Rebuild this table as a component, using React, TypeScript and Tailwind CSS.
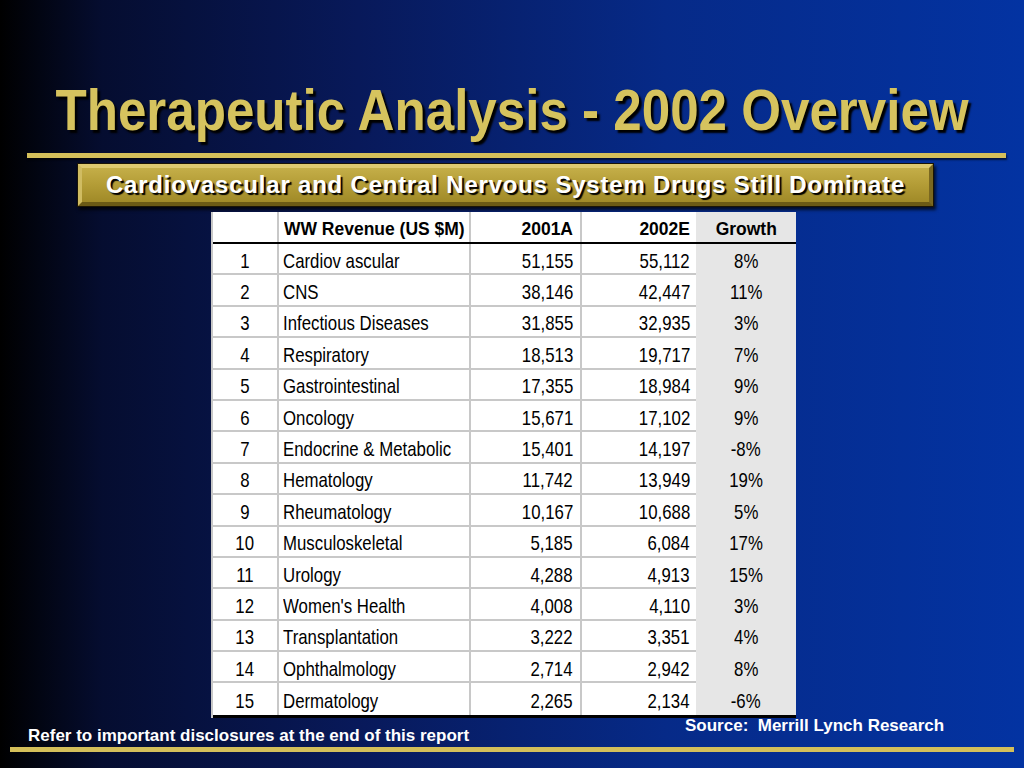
import React from "react";

const rows: [string, string, string, string, string][] = [
  ["1", "Cardiov ascular", "51,155", "55,112", "8%"],
  ["2", "CNS", "38,146", "42,447", "11%"],
  ["3", "Infectious Diseases", "31,855", "32,935", "3%"],
  ["4", "Respiratory", "18,513", "19,717", "7%"],
  ["5", "Gastrointestinal", "17,355", "18,984", "9%"],
  ["6", "Oncology", "15,671", "17,102", "9%"],
  ["7", "Endocrine & Metabolic", "15,401", "14,197", "-8%"],
  ["8", "Hematology", "11,742", "13,949", "19%"],
  ["9", "Rheumatology", "10,167", "10,688", "5%"],
  ["10", "Musculoskeletal", "5,185", "6,084", "17%"],
  ["11", "Urology", "4,288", "4,913", "15%"],
  ["12", "Women's Health", "4,008", "4,110", "3%"],
  ["13", "Transplantation", "3,222", "3,351", "4%"],
  ["14", "Ophthalmology", "2,714", "2,942", "8%"],
  ["15", "Dermatology", "2,265", "2,134", "-6%"],
];

const cols = "grid grid-cols-[66px_192px_111px_114px_100px]";

function Row({ r, last }: { r: [string, string, string, string, string]; last: boolean }) {
  return (
    <div className={`${cols} h-[31.4px] text-[21px] leading-none overflow-hidden`}>
      <div
        className={
          last
            ? "bg-white border-r-2 border-solid border-[#c8c8c8] flex items-center justify-center pt-[3px]"
            : "bg-white border-r-2 border-b-2 border-solid border-[#c8c8c8] flex items-center justify-center pt-[3px]"
        }
      >
        <span className="inline-block scale-x-[0.8] origin-center">{r[0]}</span>
      </div>
      <div
        className={
          last
            ? "bg-white border-r-2 border-solid border-[#c8c8c8] flex items-center pl-[4px] pt-[3px]"
            : "bg-white border-r-2 border-b-2 border-solid border-[#c8c8c8] flex items-center pl-[4px] pt-[3px]"
        }
      >
        <span className="inline-block scale-x-[0.8] origin-left">{r[1]}</span>
      </div>
      <div
        className={
          last
            ? "bg-white border-r-2 border-solid border-[#c8c8c8] flex items-center justify-end pr-[7px] pt-[3px]"
            : "bg-white border-r-2 border-b-2 border-solid border-[#c8c8c8] flex items-center justify-end pr-[7px] pt-[3px]"
        }
      >
        <span className="inline-block scale-x-[0.8] origin-right">{r[2]}</span>
      </div>
      <div
        className={
          last
            ? "bg-white flex items-center justify-end pr-[6px] pt-[3px]"
            : "bg-white border-b-2 border-solid border-[#c8c8c8] flex items-center justify-end pr-[6px] pt-[3px]"
        }
      >
        <span className="inline-block scale-x-[0.8] origin-right">{r[3]}</span>
      </div>
      <div
        className={
          last
            ? "bg-[#e6e6e6] flex items-center justify-center pt-[3px]"
            : "bg-[#e6e6e6] border-b-2 border-solid border-[#e6e6e6] flex items-center justify-center pt-[3px]"
        }
      >
        <span className="inline-block scale-x-[0.8] origin-center">{r[4]}</span>
      </div>
    </div>
  );
}

export default function App() {
  return (
    <div className="w-[1024px] h-[768px] overflow-hidden flex flex-col bg-[linear-gradient(90deg,#000000_0%,#050d30_10%,#08195a_35%,#062a88_65%,#0333a2_100%)] font-['Liberation_Sans',Arial,sans-serif]">
      <div className="h-[153px] pt-[78px] text-center whitespace-nowrap">
        <span className="inline-block scale-x-[0.897] origin-center text-[57px] leading-[64px] font-bold text-[#d6c35e] [text-shadow:3px_3px_2px_#000]">
          Therapeutic Analysis - 2002 Overview
        </span>
      </div>
      <div className="h-[5px] ml-[27px] mr-[18px] bg-[#d4bf5a] shadow-[1px_2px_2px_rgba(0,0,0,0.6)]" />
      <div className="mt-[5px] ml-[77px] w-[857px] h-[44px] border border-[#1a1405] shadow-[2px_3px_3px_rgba(0,0,0,0.7)]">
        <div className="h-full border-t-[4px] border-l-[4px] border-b-[4px] border-r-[4px] border-t-[#ddc970] border-l-[#d0bc62] border-b-[#6b5a15] border-r-[#7a6820] bg-[linear-gradient(180deg,#c4ae48_0%,#b39c36_50%,#a08a28_100%)] flex items-center justify-center">
          <span className="text-white font-bold text-[24px] tracking-[0.8px] leading-none whitespace-nowrap [text-shadow:2px_2px_1px_#000]">
            Cardiovascular and Central Nervous System Drugs Still Dominate
          </span>
        </div>
      </div>
      <div className="mt-[5px] ml-[211px] w-[585px] border-l-2 border-[#c8c8c8] text-black whitespace-nowrap">
        <div className={`${cols} h-[32px] border-b-2 border-black text-[19px] leading-none font-bold`}>
          <div className="bg-white border-r-2 border-[#c8c8c8]" />
          <div className="bg-white border-r-2 border-[#c8c8c8] flex items-center pl-[5px] pt-[2px]">
            <span className="inline-block scale-x-[0.92] origin-left">WW Revenue (US $M)</span>
          </div>
          <div className="bg-white border-r-2 border-[#c8c8c8] flex items-center justify-end pr-[7px] pt-[2px]">
            <span className="inline-block scale-x-[0.92] origin-right">2001A</span>
          </div>
          <div className="bg-white flex items-center justify-end pr-[6px] pt-[2px]">
            <span className="inline-block scale-x-[0.92] origin-right">2002E</span>
          </div>
          <div className="bg-[#e6e6e6] flex items-center justify-center pt-[2px]">
            <span className="inline-block scale-x-[0.92] origin-center">Growth</span>
          </div>
        </div>
        {rows.map((r, i) => (
          <Row key={i} r={r} last={i === rows.length - 1} />
        ))}
        <div className="h-[3px] bg-black" />
      </div>
      <div className="relative h-[29px] text-white font-bold text-[17px] leading-none whitespace-nowrap">
        <span className="absolute left-[28px] top-[9px]">Refer to important disclosures at the end of this report</span>
        <span className="absolute left-[685px] top-[-1px]">Source:&nbsp; Merrill Lynch Research</span>
      </div>
      <div className="h-[5px] ml-[10px] mr-[10px] bg-[#d4bf5a]" />
    </div>
  );
}
